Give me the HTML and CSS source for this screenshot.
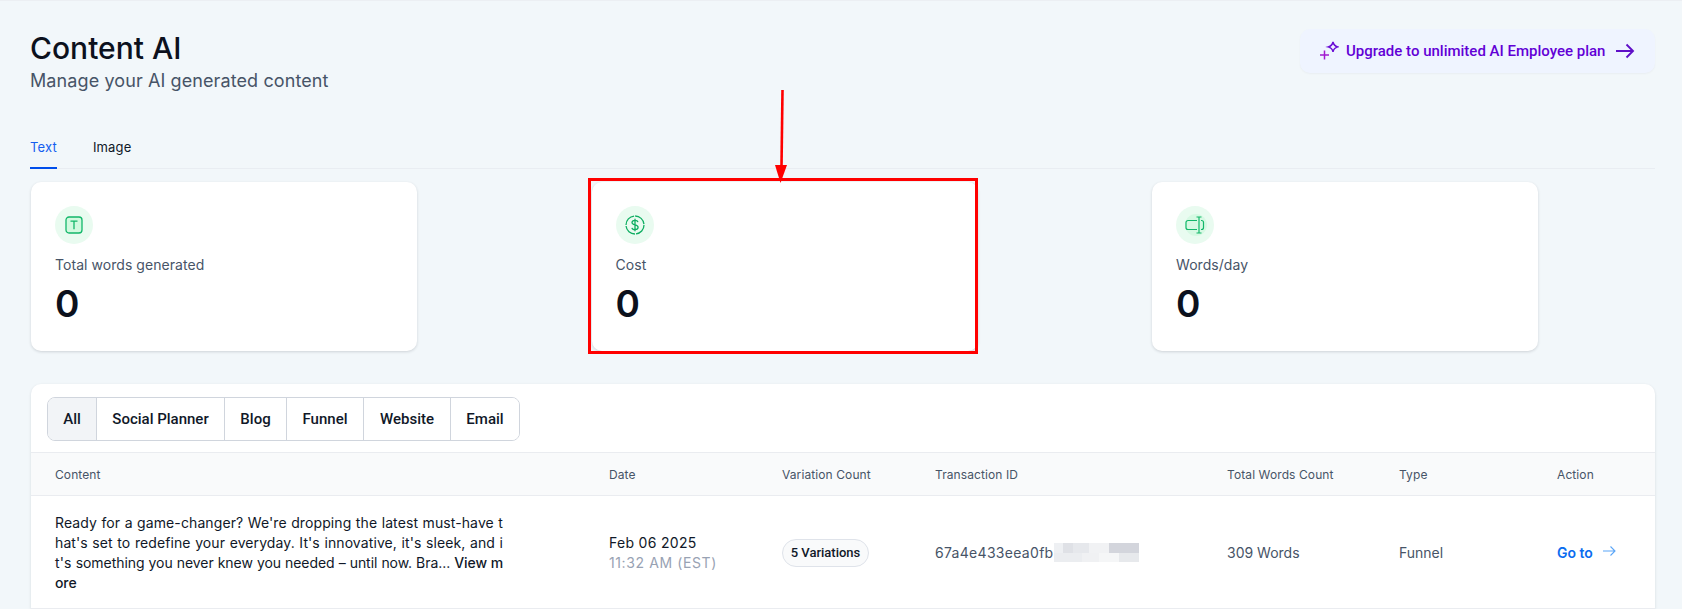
FILE: index.html
```html
<!DOCTYPE html>
<html lang="en">
<head>
<meta charset="utf-8">
<title>Content AI</title>
<link rel="stylesheet" href="styles.css">
</head>
<body>
<main class="page">
  <header class="head">
    <div>
      <h1 class="title">Content AI</h1>
      <p class="subtitle">Manage your AI generated content</p>
    </div>
    <button class="upgrade">
      <svg class="upgrade-spark" viewBox="0 0 20 20" fill="none" stroke-width="1.5">
        <path d="M14 1c.6 2.900 1.800 4.100 4.800 4.900-3 .8-4.200 2-4.800 4.900-.6-2.900-1.800-4.100-4.800-4.900 3-.8 4.200-2 4.800-4.900z" stroke="#6a0dd6"/>
        <path d="M5.500 9.500v9M1 14h9" stroke="#a21ad0"/>
      </svg>
      <span>Upgrade to unlimited AI Employee plan</span>
      <svg class="upgrade-arrow" viewBox="0 0 20 16" fill="none" stroke="#5f0fc8" stroke-width="1.900">
        <path d="M1 8h17M11.500 1.500 18 8l-6.500 6.500"/>
      </svg>
    </button>
  </header>

  <nav class="tabs">
    <a class="tab tab-active">Text</a>
    <a class="tab">Image</a>
  </nav>

  <section class="stats">
    <article class="stat">
      <span class="stat-icon">
        <svg class="glyph-t" viewBox="0 0 18 18" fill="none" stroke="#12b76a" stroke-width="1.300">
          <rect x="1" y="1" width="16" height="16" rx="3" fill="#d1fadf"/>
          <path d="M5.500 5.200h7M9 5.200v8"/>
        </svg>
      </span>
      <span class="stat-label">Total words generated</span>
      <strong class="stat-value">0</strong>
    </article>
    <article class="stat">
      <span class="stat-icon">
        <svg class="glyph-coin" viewBox="0 0 20 20" fill="none" stroke="#0fae62" stroke-width="1.300">
          <circle cx="10" cy="10" r="9" stroke-dasharray="13 1.100"/>
          <path d="M13 7.200C12.700 5.900 11.500 5.300 10 5.300c-1.700 0-3 .8-3 2.300 0 3.200 6.100 1.500 6.100 4.700 0 1.500-1.400 2.400-3.100 2.400-1.600 0-2.800-.6-3.100-1.900M10 3.800v12.400"/>
        </svg>
      </span>
      <span class="stat-label">Cost</span>
      <strong class="stat-value">0</strong>
    </article>
    <article class="stat">
      <span class="stat-icon">
        <svg class="glyph-input" viewBox="0 0 20 18" fill="none" stroke="#12b76a" stroke-width="1.200">
          <circle cx="11" cy="9" r="11" fill="#d6f9e3" stroke="none"/>
          <path d="M12 4.500H3a2 2 0 0 0-2 2v5a2 2 0 0 0 2 2h9M16 4.500h.5a2 2 0 0 1 2 2v5a2 2 0 0 1-2 2H16M14 1v16M11.500 1h5M11.500 17h5"/>
        </svg>
      </span>
      <span class="stat-label">Words/day</span>
      <strong class="stat-value">0</strong>
    </article>
  </section>

  <section class="panel">
    <div class="filters">
      <div class="segments">
        <button class="seg seg-all">All</button>
        <button class="seg seg-social">Social Planner</button>
        <button class="seg seg-blog">Blog</button>
        <button class="seg seg-funnel">Funnel</button>
        <button class="seg seg-website">Website</button>
        <button class="seg seg-email">Email</button>
      </div>
    </div>
    <div class="cols cols-head">
      <span>Content</span>
      <span>Date</span>
      <span>Variation Count</span>
      <span>Transaction ID</span>
      <span>Total Words Count</span>
      <span>Type</span>
      <span>Action</span>
    </div>
    <div class="cols cols-row">
      <p class="excerpt">Ready for a game-changer? We're dropping the latest must-have that's set to redefine your everyday. It's innovative, it's sleek, and it's <span class="tail">something you never knew you needed – until now. Bra... </span><b class="more">View more</b></p>
      <div class="date">
        <span class="date-main">Feb 06 2025</span>
        <span class="date-time">11:32 AM (EST)</span>
      </div>
      <div><span class="badge">5 Variations</span></div>
      <div class="txn"><span>67a4e433eea0fb</span><i class="redacted"></i></div>
      <span class="muted">309 Words</span>
      <span class="muted">Funnel</span>
      <a class="goto">Go to
        <svg class="goto-arrow" viewBox="0 0 14 12" fill="none" stroke="#5aa5f7" stroke-width="1.100"><path d="M1 6h12M8.500 1.500 13 6l-4.500 4.500"/></svg>
      </a>
    </div>
  </section>
</main>

<div class="mark-box"></div>
<svg class="mark-arrow" viewBox="0 0 16 94" fill="none">
  <path d="M9.500 0 8.500 76" stroke="#ff0000" stroke-width="2.600"/>
  <path d="M2 75h12L7.500 93z" fill="#ff0000"/>
</svg>
</body>
</html>
```
FILE: styles.css
```css
* { box-sizing: border-box; }
html, body { height: 100%; overflow: hidden; }
body {
  margin: 0;
  background: #f2f7fa;
  border-top: 1px solid #eceff3;
  font-family: Inter, "Liberation Sans", sans-serif;
  color: #101828;
  position: relative;
}
.page { padding: 29px 27px 0 30px; }
.head { display: flex; justify-content: space-between; align-items: flex-start; height: 84px; }
.title { margin: 0; font-size: 30px; line-height: 36px; font-weight: 500; color: #0c111d; }
.subtitle { margin: 0; font-size: 18px; line-height: 30px; color: #475467; letter-spacing: .1px; }
.upgrade {
  display: flex; align-items: center; width: 355px; height: 44px; margin-top: -1px; padding: 0 0 0 19px;
  border: 0; border-radius: 10px; background: #eff4ff;
  box-shadow: 0 1px 2px rgba(16, 24, 40, .04);
  font: 500 15px Roboto, sans-serif; color: #6200d6;
}
.upgrade-spark { width: 20px; height: 20px; margin-right: 7px; }
.upgrade-arrow { width: 20px; height: 16px; margin-left: 10px; }

.tabs { display: flex; gap: 36px; height: 55px; border-bottom: 1px solid #e9edf2; }
.tab { height: 55px; padding-top: 23px; font-size: 13px; line-height: 20px; letter-spacing: .15px; color: #101828; }
.tab-active { color: #155eef; border-bottom: 2px solid #004eeb; }

.stats { display: flex; gap: 174.5px; margin-top: 13px; padding-left: 1px; }
.stat {
  width: 386px; height: 169px; padding: 24px 24px; display: flex; flex-direction: column; align-items: flex-start;
  background: #fff; border-radius: 10px; box-shadow: 0 1px 3px rgba(16, 24, 40, .16);
}
.stat-icon { width: 38px; height: 38px; border-radius: 50%; background: #e9fbf0; display: flex; align-items: center; justify-content: center; overflow: hidden; }
.glyph-t { width: 18px; height: 18px; }
.glyph-coin { width: 20px; height: 20px; }
.glyph-input { width: 20px; height: 18px; overflow: visible; }
.stat-label { margin-top: 11px; font-size: 14px; line-height: 20px; letter-spacing: .05px; color: #475467; }
.stat-value { margin-top: 6px; font-size: 37px; line-height: 46px; font-weight: 600; color: #0c111d; }

.panel { margin: 33px 0 0 1px; width: 1624px; background: #fff; border-radius: 10px 10px 0 0; box-shadow: 0 1px 3px rgba(16, 24, 40, .12); }
.filters { height: 69px; padding: 13px 16px 0; border-bottom: 1px solid #eaecf0; }
.segments { display: inline-flex; height: 44px; border: 1px solid #d0d5dd; border-radius: 8px; overflow: hidden; }
.seg { border: 0; border-right: 1px solid #d0d5dd; background: #fff; font: 500 15px Roboto, sans-serif; color: #101828; padding: 0; }
.seg:last-child { border-right: 0; }
.seg-all { width: 49px; background: #f2f4f7; }
.seg-social { width: 128px; }
.seg-blog { width: 62px; }
.seg-funnel { width: 77px; }
.seg-website { width: 87px; }
.seg-email { width: 68px; }

.cols { display: grid; grid-template-columns: 554px 173px 153px 292px 172px 158px 1fr; padding-left: 24px; align-items: center; }
.cols-head { height: 43px; background: #f9fafb; border-bottom: 1px solid #eaecf0; font-size: 12px; letter-spacing: .1px; color: #475467; }
.cols-row { height: 113px; padding-top: 1px; border-bottom: 1px solid #eaecf0; font-size: 14px; line-height: 20px; }
.excerpt { margin: 0; width: 448px; word-break: break-all; letter-spacing: .1px; text-align: justify; color: #101828; }
.tail { letter-spacing: -.05px; }
.more { font-weight: 500; letter-spacing: -.1px; }
.date { display: flex; flex-direction: column; }
.date-main { color: #101828; letter-spacing: .3px; }
.date-time { color: #98a2b3; letter-spacing: .6px; }
.badge {
  display: inline-flex; align-items: center; justify-content: center; width: 87px; height: 28px;
  border: 1px solid #dfe3ea; border-radius: 14px; background: #f9fafb;
  font: 500 13px Roboto, sans-serif; color: #101828;
}
.txn { display: flex; align-items: center; letter-spacing: .3px; color: #475467; }
.redacted {
  display: block; width: 85px; height: 19px; margin-left: 1px;
  background:
    linear-gradient(90deg, #eef0f3 0 9px, #dfe1e6 9px 19px, #e6e8ec 19px 35px, #f1f2f4 35px 55px, #d3d5dc 55px 85px) top / 100% 10px no-repeat,
    linear-gradient(90deg, #ebedf0 0 28px, #f0f1f3 28px 45px, #f5f6f7 45px 65px, #e7e9ec 65px 85px) bottom / 100% 9px no-repeat;
}
.muted { color: #475467; }
.goto { display: flex; align-items: center; font-weight: 600; color: #0a6cf0; }
.goto-arrow { width: 14px; height: 12px; margin: -4px 0 0 9px; }

.mark-box { position: absolute; left: 588px; top: 177px; width: 390px; height: 176px; border: 3px solid #ff0000; }
.mark-arrow { position: absolute; left: 773px; top: 89px; width: 16px; height: 94px; }
```
